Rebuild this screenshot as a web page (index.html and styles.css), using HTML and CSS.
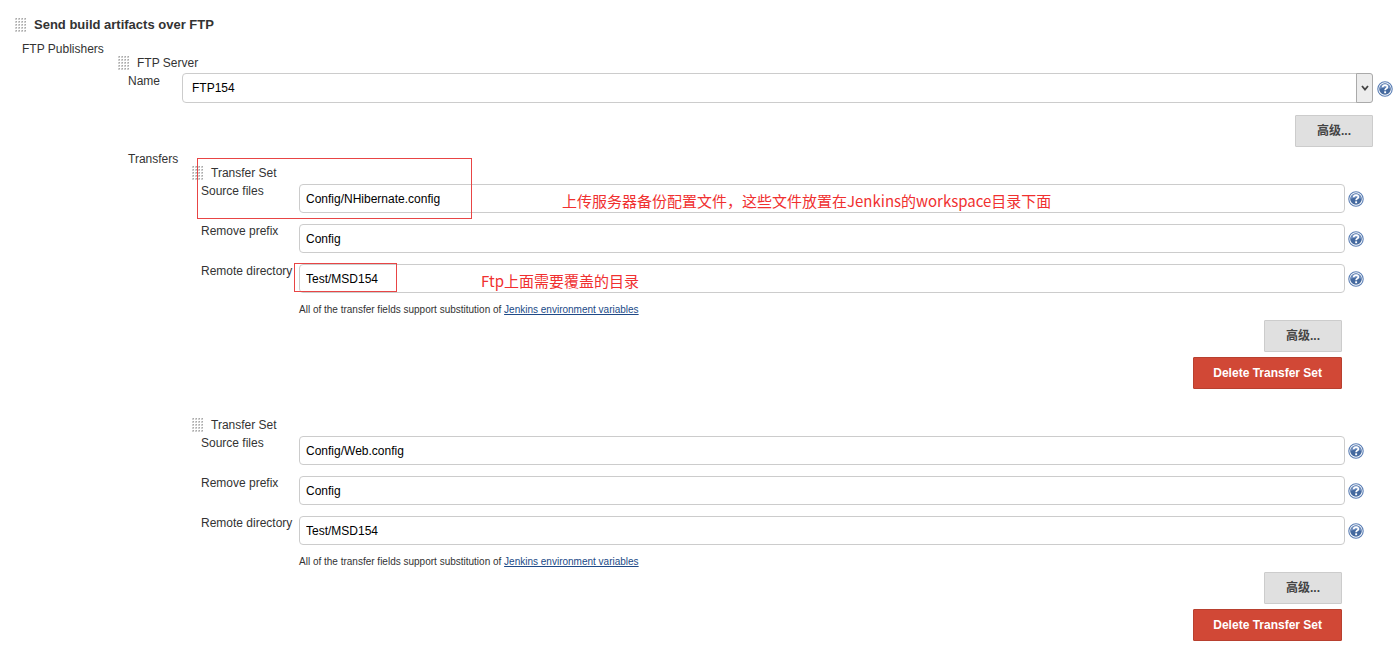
FILE: index.html
```html
<!DOCTYPE html>
<html lang="en">
<head>
<meta charset="utf-8">
<title>Send build artifacts over FTP</title>
<link rel="stylesheet" href="styles.css">
</head>
<body>
<svg class="defs" aria-hidden="true">
  <defs>
    <pattern id="dots" width="3" height="3" patternUnits="userSpaceOnUse">
      <rect width="2" height="2" fill="#d0d0d0"/>
      <rect width="1" height="1" x="1" fill="#a8a8a8"/>
    </pattern>
    <symbol id="grip" viewBox="0 0 12 14"><rect width="11" height="14" fill="url(#dots)"/></symbol>
    <symbol id="help" viewBox="0 0 16 16">
      <circle cx="8" cy="8" r="7.2" fill="#fff" stroke="#5a7eb5" stroke-width="1.1"/>
      <circle cx="8" cy="8" r="5.8" fill="#44699f"/>
      <path d="M2.600 8a5.400 5.400 0 0 1 10.800 0Q8 5 2.600 8z" fill="#7391c0"/>
      <path d="M5.700 6.300Q5.800 4.100 8.100 4.100Q10.400 4.200 10.300 6.100Q10.200 7.200 9 7.700Q8.100 8.200 8.100 9.300" fill="none" stroke="#fff" stroke-width="1.700"/>
      <rect x="7.200" y="10.300" width="1.900" height="1.900" fill="#fff"/>
    </symbol>
  </defs>
</svg>
<form class="publisher">
  <h1 class="drag-title main-title"><svg class="grip"><use href="#grip"/></svg>Send build artifacts over FTP</h1>
  <div class="publishers">
    <div class="publishers-label">FTP Publishers</div>
    <div class="server">
      <h2 class="drag-title"><svg class="grip"><use href="#grip"/></svg>FTP Server</h2>
      <div class="field server-field">
        <label for="server">Name</label>
        <div class="select-wrap">
          <select id="server"><option>FTP154</option></select>
          <span class="arrow"><svg viewBox="0 0 8 6"><path d="M1 1l3 3.500L7 1" fill="none" stroke="#444" stroke-width="1.800"/></svg></span>
        </div>
        <a class="help" href="#" aria-label="Help for Name"><svg><use href="#help"/></svg></a>
      </div>
      <div class="server-actions"><button type="button" class="btn">高级...</button></div>
      <div class="transfers">
        <div class="transfers-label">Transfers</div>
        <div class="sets">
          <section class="set">
            <h3 class="drag-title"><svg class="grip"><use href="#grip"/></svg>Transfer Set</h3>
            <div class="field"><label for="src1">Source files</label><input id="src1" type="text" value="Config/NHibernate.config"><a class="help" href="#" aria-label="Help for Source files"><svg><use href="#help"/></svg></a></div>
            <div class="field"><label for="pre1">Remove prefix</label><input id="pre1" type="text" value="Config"><a class="help" href="#" aria-label="Help for Remove prefix"><svg><use href="#help"/></svg></a></div>
            <div class="field"><label for="dir1">Remote directory</label><input id="dir1" type="text" value="Test/MSD154"><a class="help" href="#" aria-label="Help for Remote directory"><svg><use href="#help"/></svg></a></div>
            <p class="hint">All of the transfer fields support substitution of <a href="#">Jenkins environment variables</a></p>
            <div class="actions"><button type="button" class="btn">高级...</button><button type="button" class="btn danger">Delete Transfer Set</button></div>
            <div class="mark mark-source"></div>
            <div class="mark mark-directory"></div>
            <div class="note note-source">上传服务器备份配置文件，这些文件放置在Jenkins的workspace目录下面</div>
            <div class="note note-directory">Ftp上面需要覆盖的目录</div>
          </section>
          <section class="set">
            <h3 class="drag-title"><svg class="grip"><use href="#grip"/></svg>Transfer Set</h3>
            <div class="field"><label for="src2">Source files</label><input id="src2" type="text" value="Config/Web.config"><a class="help" href="#" aria-label="Help for Source files"><svg><use href="#help"/></svg></a></div>
            <div class="field"><label for="pre2">Remove prefix</label><input id="pre2" type="text" value="Config"><a class="help" href="#" aria-label="Help for Remove prefix"><svg><use href="#help"/></svg></a></div>
            <div class="field"><label for="dir2">Remote directory</label><input id="dir2" type="text" value="Test/MSD154"><a class="help" href="#" aria-label="Help for Remote directory"><svg><use href="#help"/></svg></a></div>
            <p class="hint">All of the transfer fields support substitution of <a href="#">Jenkins environment variables</a></p>
            <div class="actions"><button type="button" class="btn">高级...</button><button type="button" class="btn danger">Delete Transfer Set</button></div>
          </section>
        </div>
      </div>
    </div>
  </div>
</form>
</body>
</html>
```
FILE: styles.css
```css
* { box-sizing: border-box; }
body {
  margin: 0;
  background: #fff;
  color: #333;
  font: 12px/16px "Liberation Sans", "Noto Sans CJK SC", sans-serif;
}
.defs { position: absolute; width: 0; height: 0; }
.publisher { padding: 15px 7px 6px 15px; }
.drag-title {
  display: flex;
  align-items: center;
  gap: 7px;
  height: 20px;
  margin: 0;
  font-size: 12px;
  font-weight: normal;
}
.main-title { font-size: 13px; font-weight: bold; }
.grip { width: 12px; height: 14px; flex: none; }
.publishers { display: flex; padding-left: 7px; }
.publishers-label { flex: none; width: 96px; padding-top: 6px; }
.server { flex: 1; min-width: 0; padding-top: 18px; }
.field {
  display: grid;
  grid-template-columns: 98px 1fr 16px;
  min-height: 40px;
  align-items: start;
}
.field label { white-space: nowrap; }
.field input, .field select {
  width: 100%;
  min-width: 0;
  height: 29px;
  margin: 1px 0 0;
  padding: 0 6px;
  border: 1px solid #ccc;
  border-radius: 4px;
  background: #fff;
  color: #000;
  font: inherit;
}
.help { display: block; height: 16px; margin-top: 8px; }
.help svg { display: block; width: 16px; height: 16px; }
.server-field { grid-template-columns: 54px 1fr 16px; padding-left: 10px; }
.select-wrap { position: relative; margin-right: 4px; }
.field select { height: 30px; margin-top: 0; padding-left: 9px; appearance: none; display: block; }
.arrow {
  position: absolute;
  top: 0;
  right: 0;
  bottom: 0;
  display: flex;
  align-items: center;
  justify-content: center;
  width: 17px;
  border: 1px solid #aaa;
  border-radius: 0 3px 3px 0;
  background: #ececec;
  pointer-events: none;
}
.arrow svg { width: 8px; height: 6px; }
.btn {
  height: 32px;
  padding: 0 21px;
  border: 1px solid #ccc;
  border-radius: 1px;
  background: #e0e0e0;
  color: #444;
  font: bold 12px/16px "Liberation Sans", "Noto Sans CJK SC", sans-serif;
}
.btn.danger { padding: 0 19px; border-color: #b8402f; background: #d14836; color: #fff; }
.server-actions { display: flex; justify-content: flex-end; padding: 2px 20px 0 0; }
.transfers { display: flex; padding-left: 10px; }
.transfers-label { flex: none; width: 64px; padding-top: 4px; }
.sets { flex: 1; min-width: 0; display: grid; gap: 26px; padding-top: 16px; }
.set { position: relative; padding-right: 29px; }
.set .field { padding-left: 9px; }
.set .field input { width: calc(100% - 3px); }
.hint { margin: 0; padding: 1px 0 0 107px; font-size: 10px; line-height: 12px; }
.hint a { color: #204a87; }
.actions {
  display: flex;
  flex-direction: column;
  align-items: flex-end;
  gap: 5px;
  padding: 4px 22px 0 0;
}
.mark { position: absolute; border: 1px solid #e84545; pointer-events: none; }
.mark-source { left: 5px; top: -5px; width: 275px; height: 61px; }
.mark-directory { left: 102px; top: 100px; width: 103px; height: 29px; }
.note {
  position: absolute;
  color: #f03030;
  font: 15px/20px "Noto Sans CJK SC", sans-serif;
  white-space: nowrap;
  pointer-events: none;
}
.note-source { left: 370px; top: 28px; }
.note-directory { left: 289px; top: 108px; }
```
